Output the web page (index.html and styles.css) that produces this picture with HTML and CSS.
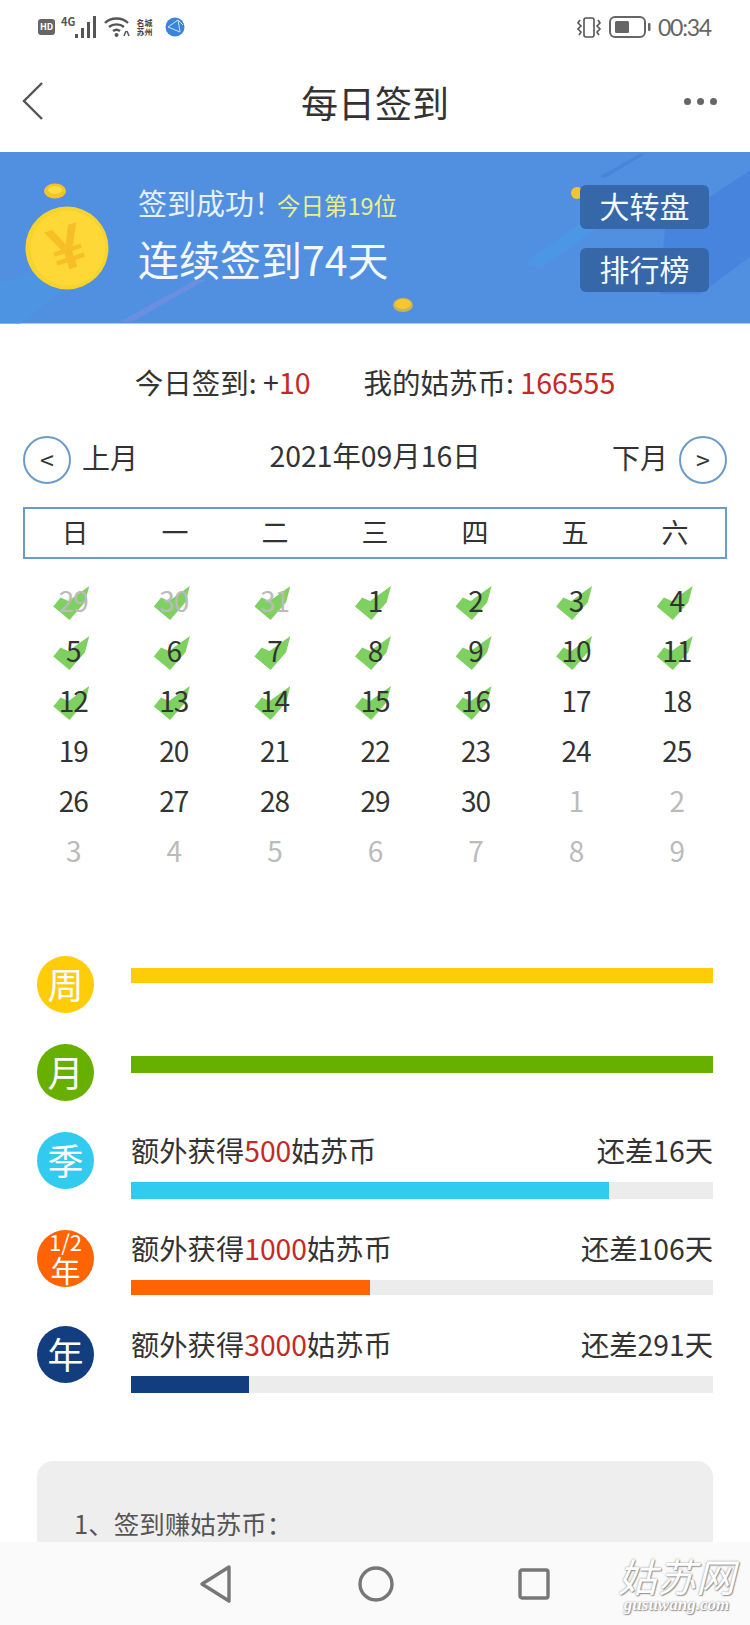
FILE: index.html
```html
<!DOCTYPE html>
<html lang="zh-CN">
<head>
  <meta charset="UTF-8" />
  <meta name="viewport" content="width=device-width, initial-scale=1.0"/>
  <title>每日签到</title>
  <link rel="stylesheet" href="styles.css">
</head>
<body>
  <div class="page">
    <div class="statusbar">
      <div class="status-left">
        <span class="hd">HD</span>
        <span class="net">4G</span>
        <svg class="signal" width="24" height="24" viewBox="0 0 24 24">
          <rect x="1" y="19" width="3" height="4" fill="#555"/>
          <rect x="7" y="13" width="3" height="10" fill="#555"/>
          <rect x="13" y="7" width="3" height="16" fill="#555"/>
          <rect x="19" y="1" width="3" height="22" fill="#555"/>
        </svg>
        <svg class="wifi" width="27" height="22" viewBox="0 0 27 22" fill="none" stroke="#555" stroke-width="2.4">
          <path d="M1 7 C7 1 18 1 24 7"/>
          <path d="M5 11 C9 7.5 16 7.5 20 11"/>
          <path d="M9 15 C11 13.5 14 13.5 16 15"/>
          <circle cx="12.5" cy="19" r="2" fill="#555" stroke="none"/>
          <path d="M20 20 L22 15 M25 20 L23 15" stroke-width="1.5"/>
        </svg>
        <span class="city">名城<br>苏州</span>
        <svg class="globe" width="20" height="20" viewBox="0 0 20 20" fill="none">
          <circle cx="10" cy="10" r="9.5" fill="#3a85dc"/>
          <path d="M3 10 L13 3 L15 15 Z M13 3 L18 8" stroke="#cfe3f8" stroke-width="1"/>
        </svg>
      </div>
      <div class="status-right">
        <svg width="26" height="24" viewBox="0 0 26 24" fill="none" stroke="#555" stroke-width="1.6">
          <rect x="8" y="3" width="10" height="19" rx="2"/>
          <path d="M4 5 L2 8 L5 11 L2 14 L5 17 L3 20 M22 5 L24 8 L21 11 L24 14 L21 17 L23 20"/>
        </svg>
        <svg class="battery" width="42" height="24" viewBox="0 0 42 24">
          <rect x="1" y="2" width="35" height="20" rx="5" fill="none" stroke="#666" stroke-width="2"/>
          <rect x="6" y="6" width="14" height="12" rx="1.5" fill="#666"/>
          <rect x="39" y="8" width="2.5" height="8" rx="1" fill="#666"/>
        </svg>
        <span class="clock">00:34</span>
      </div>
    </div>

    <header class="titlebar">
      <svg class="back" width="22" height="40" viewBox="0 0 22 40" fill="none" stroke="#555" stroke-width="2.4">
        <path d="M20 2 L2 20 L20 38"/>
      </svg>
      <h1>每日签到</h1>
      <div class="more"><i></i><i></i><i></i></div>
    </header>

    <section class="banner">
      <svg class="banner-art" width="750" height="172" viewBox="0 0 750 172">
        <path d="M0 172 L0 130 L110 100 L20 172 Z" fill="#4a97e6" opacity=".5"/>
        <path d="M120 170 L195 128 L205 128 L132 170 Z" fill="#8b8fe0" opacity=".45"/>
        <path d="M525 112 L595 60 L620 60 L540 116 Z" fill="#4a9ce8" opacity=".6"/>
        <path d="M600 24 L640 2 L645 2 L605 26 Z" fill="#3f7fd8" opacity=".6"/>
        <path d="M665 75 L750 18 L750 105 L700 142 L660 142 Z" fill="#437fdd" opacity=".7"/>
        <ellipse cx="55" cy="39" rx="11" ry="7.5" fill="#f4c430"/>
        <ellipse cx="55" cy="38" rx="7" ry="4" fill="#ffdc3e"/>
        <ellipse cx="403" cy="153" rx="10" ry="7" fill="#c9b25a"/>
        <ellipse cx="403" cy="152" rx="8" ry="5" fill="#f7c82c"/>
        <circle cx="577" cy="41" r="6" fill="#f4c430"/>
      </svg>
      <svg class="coin" width="84" height="84" viewBox="0 0 84 84">
        <circle cx="42" cy="42" r="41.5" fill="#f8d32c"/>
        <circle cx="43" cy="42" r="37.5" fill="#fdd836"/>
        <text x="42" y="63" class="coin-mark" transform="rotate(-18 42 42)">¥</text>
      </svg>
      <div class="banner-text">
        <p class="banner-top">签到成功！<span class="rank">今日第19位</span></p>
        <p class="banner-days">连续签到74天</p>
      </div>
      <div class="banner-btns">
        <a href="#" class="banner-btn">大转盘</a>
        <a href="#" class="banner-btn">排行榜</a>
      </div>
    </section>

    <div class="stats">
      <span>今日签到: +<b>10</b></span>
      <span>我的姑苏币: <b>166555</b></span>
    </div>

    <div class="calnav">
      <div class="calnav-side">
        <span class="round">&lt;</span>
        <span class="calnav-label">上月</span>
      </div>
      <div class="caldate">2021年09月16日</div>
      <div class="calnav-side">
        <span class="calnav-label">下月</span>
        <span class="round">&gt;</span>
      </div>
    </div>

    <div class="weekhead">
      <span>日</span><span>一</span><span>二</span><span>三</span><span>四</span><span>五</span><span>六</span>
    </div>

    <div class="days">
      <div class="day done off"><span>29</span></div>
      <div class="day done off"><span>30</span></div>
      <div class="day done off"><span>31</span></div>
      <div class="day done"><span>1</span></div>
      <div class="day done"><span>2</span></div>
      <div class="day done"><span>3</span></div>
      <div class="day done"><span>4</span></div>
      <div class="day done"><span>5</span></div>
      <div class="day done"><span>6</span></div>
      <div class="day done"><span>7</span></div>
      <div class="day done"><span>8</span></div>
      <div class="day done"><span>9</span></div>
      <div class="day done"><span>10</span></div>
      <div class="day done"><span>11</span></div>
      <div class="day done"><span>12</span></div>
      <div class="day done"><span>13</span></div>
      <div class="day done"><span>14</span></div>
      <div class="day done"><span>15</span></div>
      <div class="day done"><span>16</span></div>
      <div class="day"><span>17</span></div>
      <div class="day"><span>18</span></div>
      <div class="day"><span>19</span></div>
      <div class="day"><span>20</span></div>
      <div class="day"><span>21</span></div>
      <div class="day"><span>22</span></div>
      <div class="day"><span>23</span></div>
      <div class="day"><span>24</span></div>
      <div class="day"><span>25</span></div>
      <div class="day"><span>26</span></div>
      <div class="day"><span>27</span></div>
      <div class="day"><span>28</span></div>
      <div class="day"><span>29</span></div>
      <div class="day"><span>30</span></div>
      <div class="day off"><span>1</span></div>
      <div class="day off"><span>2</span></div>
      <div class="day off"><span>3</span></div>
      <div class="day off"><span>4</span></div>
      <div class="day off"><span>5</span></div>
      <div class="day off"><span>6</span></div>
      <div class="day off"><span>7</span></div>
      <div class="day off"><span>8</span></div>
      <div class="day off"><span>9</span></div>
    </div>

    <div class="rewards">
      <div class="reward">
        <div class="badge week">周</div>
        <div class="reward-body">
          <div class="bar bar-first thin"><div class="fill week" style="width:100%"></div></div>
        </div>
      </div>
      <div class="reward">
        <div class="badge month">月</div>
        <div class="reward-body">
          <div class="bar bar-first"><div class="fill month" style="width:100%"></div></div>
        </div>
      </div>
      <div class="reward">
        <div class="badge season">季</div>
        <div class="reward-body">
          <div class="reward-line">
            <span>额外获得<b>500</b>姑苏币</span>
            <span>还差16天</span>
          </div>
          <div class="bar"><div class="fill season" style="width:82.2%"></div></div>
        </div>
      </div>
      <div class="reward">
        <div class="badge half"><small>1/2</small><span>年</span></div>
        <div class="reward-body">
          <div class="reward-line">
            <span>额外获得<b>1000</b>姑苏币</span>
            <span>还差106天</span>
          </div>
          <div class="bar thin"><div class="fill half" style="width:41%"></div></div>
        </div>
      </div>
      <div class="reward">
        <div class="badge year">年</div>
        <div class="reward-body">
          <div class="reward-line">
            <span>额外获得<b>3000</b>姑苏币</span>
            <span>还差291天</span>
          </div>
          <div class="bar"><div class="fill year" style="width:20.2%"></div></div>
        </div>
      </div>
    </div>

    <div class="rules">
      <p>1、签到赚姑苏币：</p>
    </div>

    <div class="navbar">
      <svg width="34" height="40" viewBox="0 0 34 40" fill="none" stroke="#777" stroke-width="3.4" stroke-linejoin="round">
        <path d="M30 3 L3 20 L30 37 Z"/>
      </svg>
      <svg width="36" height="36" viewBox="0 0 36 36" fill="none" stroke="#777" stroke-width="3.4">
        <circle cx="18" cy="18" r="16"/>
      </svg>
      <svg width="32" height="32" viewBox="0 0 32 32" fill="none" stroke="#777" stroke-width="3.4" stroke-linejoin="round">
        <rect x="2" y="2" width="28" height="28" rx="2"/>
      </svg>
    </div>
    <div class="watermark">
      <div class="wm-name">姑苏网</div>
      <div class="wm-url">gusuwang.com</div>
    </div>
  </div>
</body>
</html>
```

FILE: styles.css
```css
:root {
  --text: #333;
  --red: #c62828;
  --line: #6b9bc8;
  --cjk: "Noto Sans CJK SC", "Noto Sans", sans-serif;
}

body {
  margin: 0;
  font-family: var(--cjk);
  color: var(--text);
  background: #fff;
}

p, h1 {
  margin: 0;
  font-weight: 400;
}

b {
  font-weight: 400;
  color: var(--red);
}

.page {
  position: relative;
  width: 750px;
  height: 1625px;
  overflow: hidden;
}

/* status bar */
.statusbar {
  height: 50px;
  box-sizing: border-box;
  padding: 3px 39px 0 38px;
  display: flex;
  justify-content: space-between;
  align-items: center;
  color: #666;
}

.status-left,
.status-right {
  display: flex;
  align-items: center;
}

.hd {
  width: 17px;
  height: 16px;
  border-radius: 3px;
  background: #666;
  color: #fff;
  font-size: 9px;
  font-weight: 700;
  line-height: 16px;
  text-align: center;
}

.net {
  margin: -12px 0 0 6px;
  font-size: 11px;
  line-height: 12px;
  font-weight: 700;
  color: #555;
}

.signal {
  margin-left: -1px;
}

.wifi {
  margin-left: 6px;
}

.city {
  margin-left: 5px;
  width: 20px;
  font-family: "Noto Sans CJK SC", serif;
  font-size: 8px;
  font-weight: 700;
  line-height: 9px;
  color: #444;
}

.globe {
  margin-left: 9px;
}

.status-right svg {
  margin-right: 7px;
}

.clock {
  font-family: "Lato", sans-serif;
  font-size: 23px;
  letter-spacing: -1.2px;
  color: #666;
}

/* title */
.titlebar {
  height: 102px;
  padding: 2px 33px 0 22px;
  box-sizing: border-box;
  display: flex;
  justify-content: space-between;
  align-items: center;
}

.titlebar h1 {
  font-size: 37px;
  color: #333;
}

.back {
  margin: -2px 22px 0 0;
}

.more {
  margin-top: -2px;
  display: flex;
  gap: 6px;
}

.more i {
  width: 7px;
  height: 7px;
  border-radius: 50%;
  background: #666;
}

/* banner */
.banner {
  position: relative;
  height: 172px;
  box-sizing: border-box;
  padding: 0 41px 0 25px;
  border-bottom: 1px solid #a9cdf2;
  background: #5190e0;
  display: flex;
  align-items: center;
  color: #fff;
}

.banner-art {
  position: absolute;
  left: 0;
  top: 0;
}

.coin {
  position: relative;
  margin-top: 20px;
}

.coin-mark {
  font-family: "Liberation Sans", sans-serif;
  font-size: 62px;
  font-weight: 700;
  fill: #f7bf27;
  text-anchor: middle;
}

.banner-text {
  position: relative;
  margin-left: 29px;
  padding-bottom: 7px;
  flex: 1;
  color: #f3f8fe;
}

.banner-top {
  font-size: 29px;
  line-height: 40px;
  color: #e6f1fc;
}

.rank {
  margin-left: -6px;
  font-size: 23.5px;
  color: #e8f08c;
}

.banner-days {
  margin-top: 5px;
  font-size: 41px;
  line-height: 56px;
}

.banner-btns {
  position: relative;
  padding-top: 1px;
  display: flex;
  flex-direction: column;
  gap: 19px;
}

.banner-btn {
  width: 129px;
  height: 44px;
  border-radius: 6px;
  background: #3567a9;
  color: #f3f8fe;
  font-size: 30px;
  line-height: 41px;
  text-align: center;
  text-decoration: none;
}

/* totals */
.stats {
  padding: 38px 0 34px;
  display: flex;
  justify-content: center;
  gap: 53px;
  font-size: 28.5px;
  line-height: 40px;
}

/* month switcher */
.calnav {
  height: 48px;
  padding: 0 23px;
  display: flex;
  justify-content: space-between;
  align-items: center;
  font-size: 28px;
}

.calnav-side {
  display: flex;
  align-items: center;
  gap: 11px;
}

.calnav-label {
  margin-top: -7px;
}

.round {
  width: 48px;
  height: 48px;
  box-sizing: border-box;
  border: 2px solid var(--line);
  border-radius: 50%;
  font-size: 25px;
  line-height: 42px;
  text-align: center;
}

.caldate {
  margin-top: -11px;
  font-size: 28.4px;
}

.weekhead {
  margin: 23px 23px 0;
  height: 52px;
  box-sizing: border-box;
  padding-bottom: 4px;
  border: 2px solid var(--line);
  display: grid;
  grid-template-columns: repeat(7, 1fr);
  align-items: center;
  text-align: center;
  font-size: 27px;
}

.days {
  margin: 16px 23px 0;
  display: grid;
  grid-template-columns: repeat(7, 1fr);
  grid-auto-rows: 50px;
}

.day {
  position: relative;
  display: flex;
  align-items: center;
  justify-content: center;
  font-size: 28px;
  letter-spacing: -1px;
  color: #333;
}

.day span {
  position: relative;
}

.day.off {
  color: #bbb;
}

.day.done::before {
  content: "";
  position: absolute;
  left: calc(50% - 20px);
  top: 11px;
  width: 36px;
  height: 34px;
  background: #7ed061;
  clip-path: polygon(0 60%, 20% 34%, 42% 44%, 100% 0, 88% 48%, 45% 100%);
}

/* reward rows */
.rewards {
  margin: 81px 37px 0;
  display: flex;
  flex-direction: column;
  gap: 31px;
}

.reward {
  display: flex;
  gap: 37px;
}

.badge {
  flex: none;
  width: 57px;
  height: 57px;
  border-radius: 50%;
  color: #fff;
  font-size: 36px;
  line-height: 54px;
  text-align: center;
}

.badge small {
  display: block;
  height: 24px;
  font-size: 22px;
  line-height: 22px;
}

.badge.half span {
  display: block;
  font-size: 30px;
  line-height: 30px;
}

.reward-body {
  flex: 1;
}

.reward-line {
  height: 38px;
  box-sizing: border-box;
  padding-bottom: 3px;
  margin-bottom: 12px;
  display: flex;
  justify-content: space-between;
  align-items: center;
  font-size: 28.3px;
}

.bar {
  height: 17px;
  background: #ececec;
}

.bar.thin {
  height: 15px;
}

.bar-first {
  margin-top: 12px;
}

.fill {
  height: 100%;
}

.week { background: #ffcc0a; }
.month { background: #68b000; }
.season { background: #33caf0; }
.half { background: #ff6302; }
.year { background: #123e80; }

/* rules */
.rules {
  margin: 68px 37px 0;
  min-height: 200px;
  box-sizing: border-box;
  padding: 43px 37px;
  border-radius: 16px;
  background: #eee;
  font-size: 25.5px;
  line-height: 38px;
  color: #555;
}

.rules p {
  width: fit-content;
}

/* phone nav keys, over the page */
.navbar {
  position: absolute;
  left: 0;
  right: 0;
  bottom: 0;
  height: 83px;
  padding: 0 200px 0 199px;
  display: flex;
  justify-content: space-between;
  align-items: center;
  background: #fafafa;
}

.watermark {
  position: absolute;
  right: 15px;
  bottom: 11px;
  text-align: center;
  color: #fff;
  font-style: italic;
  text-shadow: 0 0 2px #888, 1px 1px 1px #999;
}

.wm-name {
  font-size: 39px;
  line-height: 42px;
}

.wm-url {
  font-family: "Liberation Serif", serif;
  font-size: 17px;
  line-height: 18px;
  font-weight: 700;
}
```
